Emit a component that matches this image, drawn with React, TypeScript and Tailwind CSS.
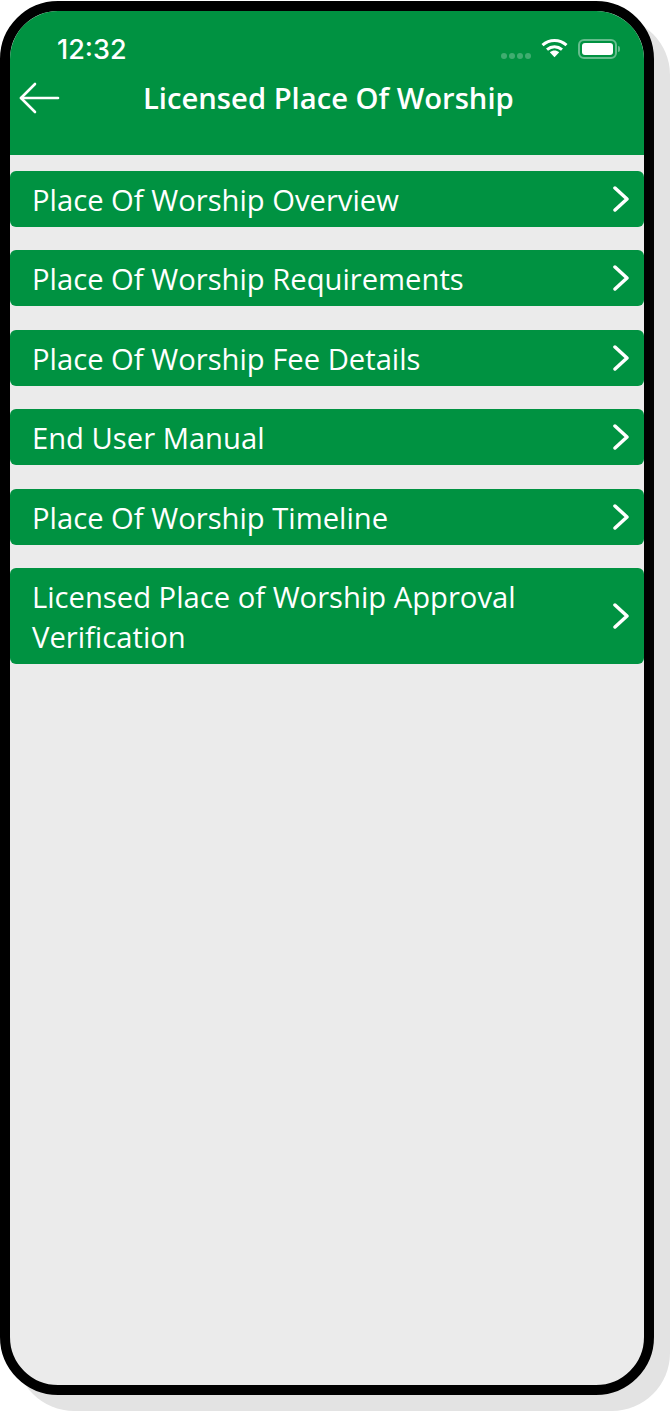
const menuItems = [
  'Place Of Worship Overview',
  'Place Of Worship Requirements',
  'Place Of Worship Fee Details',
  'End User Manual',
  'Place Of Worship Timeline',
  'Licensed Place of Worship Approval Verification',
];

const StatusIcons = () => (
  <div className="flex items-center mt-[4px]">
    <div className="flex gap-[2px] mt-[14px] mr-[10px]">
      {[0, 1, 2, 3].map((dot) => (
        <span key={dot} className="w-[6px] h-[6px] rounded-full bg-white/25" />
      ))}
    </div>
    <svg width="27" height="20" viewBox="0 0 27 20" fill="none" className="mr-[10px] mb-[1px]">
      <path d="M1.5 7.2C8.5 .9 18.5 .9 25.5 7.2" stroke="white" strokeWidth="3" />
      <path d="M6 11.6C10.5 7.7 16.5 7.7 21 11.6" stroke="white" strokeWidth="3" />
      <path d="M8.8 14.2C11.8 11.8 15.2 11.8 18.2 14.2L13.5 19.2Z" fill="white" />
    </svg>
    <div className="flex items-center">
      <div className="w-[39px] h-[20px] rounded-[6px] border-2 border-white/40 p-[2px]">
        <div className="w-full h-full rounded-[3px] bg-white" />
      </div>
      <div className="w-[2px] h-[6px] ml-[1px] rounded-r-full bg-white/40" />
    </div>
  </div>
);

const BackArrow = () => (
  <svg width="42" height="32" viewBox="0 0 42 32" fill="none" stroke="white" strokeWidth="2.6" strokeLinecap="round" strokeLinejoin="round">
    <path d="M2 16H39" />
    <path d="M16 2L2 16L16 30" />
  </svg>
);

const Chevron = () => (
  <svg width="16" height="26" viewBox="0 0 16 26" fill="none" stroke="white" strokeWidth="3.5" strokeLinecap="round" strokeLinejoin="round" className="shrink-0 -mt-[2px]">
    <path d="M2 2L14 13L2 24" />
  </svg>
);

export default function App() {
  return (
    <div className="w-[670px] h-[1411px] bg-white pt-px font-['Open_Sans',sans-serif] overflow-hidden">
      <div className="w-[654px] h-[1394px] border-[10px] border-black rounded-[58px] bg-[#ebebeb] shadow-[16px_16px_0_#e3e3e3] overflow-hidden">
        <header className="h-[144px] bg-[#009241] text-white">
          <div className="flex justify-between items-start pl-[47px] pr-[24px] pt-[23px] h-[59px]">
            <span className="font-['Inter',sans-serif] font-medium text-[27px] leading-[32px]">12:32</span>
            <StatusIcons />
          </div>
          <div className="flex items-center h-[44px] pl-[9px] mt-[6px]">
            <BackArrow />
            <h1 className="ml-[82px] text-[29.2px] leading-[44px] font-semibold whitespace-nowrap">
              Licensed Place Of Worship
            </h1>
          </div>
        </header>
        <nav className="flex flex-col gap-[23.4px] pt-[16px]">
          {menuItems.map((item) => (
            <div
              key={item}
              className="flex items-center justify-between min-h-[56px] pl-[22px] pr-[15px] pt-[9px] pb-[7px] rounded-[6px] bg-[#009241] text-white"
            >
              <span className="max-w-[520px] text-[29.2px] leading-[40px]">{item}</span>
              <Chevron />
            </div>
          ))}
        </nav>
      </div>
    </div>
  );
}
